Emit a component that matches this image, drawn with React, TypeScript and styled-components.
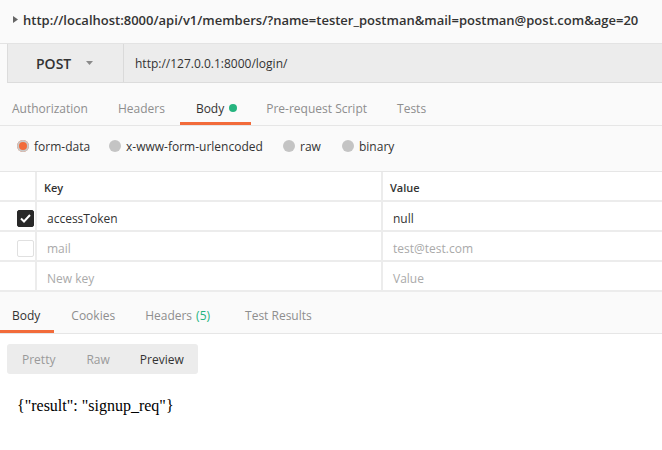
import React from "react";
import styled, { createGlobalStyle } from "styled-components";

const GlobalStyle = createGlobalStyle`
  html, body { margin: 0; padding: 0; background: #ffffff; }
  body { font-family: "Open Sans", "Liberation Sans", sans-serif; color: #333; }
  * { box-sizing: border-box; }
`;

const Page = styled.div`
  width: 662px;
  height: 450px;
  overflow: hidden;
  background: #ffffff;
  display: flex;
  flex-direction: column;
`;

const TopBar = styled.div`
  height: 44px;
  background: #fafafa;
  border-bottom: 1px solid #e3e3e3;
  display: flex;
  align-items: center;
  padding: 0 0 4px 13px;
  gap: 5px;
`;

const TopTitle = styled.span`
  font-size: 13px;
  font-weight: 600;
  color: #333;
  white-space: nowrap;
`;

const RequestArea = styled.div`
  background: #fafafa;
  padding-left: 7px;
`;

const RequestBar = styled.div`
  height: 39px;
  display: flex;
  background: #ececec;
  border: 1px solid #dcdcdc;
  border-right: none;
  border-top: none;
`;

const MethodSelect = styled.div`
  width: 116px;
  border-right: 1px solid #dadada;
  display: flex;
  align-items: center;
  padding-left: 28px;
  gap: 15px;
  font-size: 14px;
  font-weight: 600;
  color: #333;
`;

const UrlInput = styled.div`
  display: flex;
  align-items: center;
  padding-left: 11px;
  font-size: 12px;
  color: #333;
`;

const TabRow = styled.div<{ $height: number }>`
  height: ${(p) => p.$height}px;
  background: #fafafa;
  border-bottom: 1px solid #e6e6e6;
  display: flex;
  align-items: stretch;
`;

const Tab = styled.div<{ $active?: boolean; $pl: number; $pr: number; $pt: number }>`
  display: flex;
  align-items: center;
  gap: 5px;
  padding: ${(p) => p.$pt}px ${(p) => p.$pr}px 0 ${(p) => p.$pl}px;
  font-size: 12px;
  color: ${(p) => (p.$active ? "#333" : "#8e8e8e")};
  border-bottom: 3px solid ${(p) => (p.$active ? "#f26b3a" : "transparent")};
  white-space: nowrap;
`;

const Dot = styled.span`
  width: 8px;
  height: 8px;
  border-radius: 50%;
  background: #26b47f;
`;

const Count = styled.span`
  color: #26b47f;
  margin-left: 4px;
`;

const OptionsRow = styled.div`
  height: 45px;
  background: #fafafa;
  display: flex;
  align-items: center;
  padding: 0 0 5px 17px;
`;

const RadioOption = styled.label<{ $w: number }>`
  width: ${(p) => p.$w}px;
  display: flex;
  align-items: center;
  gap: 5px;
  font-size: 12px;
  color: #333;
`;

const Radio = styled.span<{ $on?: boolean }>`
  width: 12px;
  height: 12px;
  border-radius: 50%;
  background: ${(p) => (p.$on ? "#f26b3a" : "#c4c4c4")};
  box-shadow: ${(p) => (p.$on ? "inset 0 0 0 2px #c9c9c9" : "none")};
`;

const Table = styled.div`
  display: grid;
  grid-template-columns: 37px 346px 1fr;
  border-top: 1px solid #e6e6e6;
  background: #ffffff;
`;

const Cell = styled.div<{ $head?: boolean; $muted?: boolean; $last?: boolean }>`
  height: 30px;
  display: flex;
  align-items: center;
  padding-top: ${(p) => (p.$head ? 2 : 4)}px;
  padding-left: ${(p) => (p.$head ? 7 : 10)}px;
  border-bottom: 2px solid #ececec;
  border-right: ${(p) => (p.$last ? "none" : "2px solid #ececec")};
  font-size: ${(p) => (p.$head ? 11 : 12)}px;
  font-weight: ${(p) => (p.$head ? 600 : 400)};
  color: ${(p) => (p.$muted ? "#aaa" : "#333")};
`;

const CheckCell = styled.div`
  height: 30px;
  display: flex;
  align-items: center;
  padding-top: 4px;
  padding-left: 17px;
  border-bottom: 2px solid #ececec;
  border-right: 2px solid #ececec;
`;

const Checkbox = styled.span<{ $checked?: boolean }>`
  width: 17px;
  height: 17px;
  border-radius: 2px;
  background: ${(p) => (p.$checked ? "#282828" : "#fff")};
  border: 1px solid ${(p) => (p.$checked ? "#282828" : "#e0e0e0")};
  display: flex;
  align-items: center;
  justify-content: center;
`;

const Spacer = styled.div`
  height: 2px;
  background: #fafafa;
`;

const ResponseBody = styled.div`
  flex: 1;
  background: #ffffff;
  padding: 10px 7px;
`;

const Segmented = styled.div`
  width: 191px;
  height: 30px;
  background: #ececec;
  border-radius: 3px;
  display: flex;
  align-items: center;
`;

const Segment = styled.span<{ $active?: boolean; $pl: number }>`
  padding-left: ${(p) => p.$pl}px;
  font-size: 12px;
  color: ${(p) => (p.$active ? "#333" : "#9a9a9a")};
`;

const Output = styled.div`
  margin-top: 23px;
  padding-left: 10px;
  font-family: "Liberation Serif", "Times New Roman", serif;
  font-size: 16px;
  color: #000;
`;

const Caret = () => (
  <svg width="7" height="4" viewBox="0 0 7 4">
    <path d="M0 0 L7 0 L3.5 4 Z" fill="#8a8a8a" />
  </svg>
);

const Expand = () => (
  <svg width="5" height="7" viewBox="0 0 5 7">
    <path d="M0 0 L5 3.5 L0 7 Z" fill="#666" />
  </svg>
);

const Tick = () => (
  <svg width="11" height="9" viewBox="0 0 11 9">
    <path d="M1 4.5 L4 7.5 L10 1" stroke="#fff" strokeWidth="2" fill="none" />
  </svg>
);

export default function App() {
  return (
    <Page>
      <GlobalStyle />
      <TopBar>
        <Expand />
        <TopTitle>
          http://localhost:8000/api/v1/members/?name=tester_postman&amp;mail=postman@post.com&amp;age=20
        </TopTitle>
      </TopBar>
      <RequestArea>
        <RequestBar>
          <MethodSelect>
            POST <Caret />
          </MethodSelect>
          <UrlInput>http://127.0.0.1:8000/login/</UrlInput>
        </RequestBar>
      </RequestArea>
      <TabRow $height={43}>
        <Tab $pt={11} $pl={12} $pr={15}>Authorization</Tab>
        <Tab $pt={11} $pl={15} $pr={15}>Headers</Tab>
        <Tab $pt={11} $active $pl={16} $pr={14}>
          Body <Dot />
        </Tab>
        <Tab $pt={11} $pl={15} $pr={15}>Pre-request Script</Tab>
        <Tab $pt={11} $pl={15} $pr={15}>Tests</Tab>
      </TabRow>
      <OptionsRow>
        <RadioOption $w={92}>
          <Radio $on /> form-data
        </RadioOption>
        <RadioOption $w={174}>
          <Radio /> x-www-form-urlencoded
        </RadioOption>
        <RadioOption $w={59}>
          <Radio /> raw
        </RadioOption>
        <RadioOption $w={80}>
          <Radio /> binary
        </RadioOption>
      </OptionsRow>
      <Table>
        <CheckCell />
        <Cell $head>Key</Cell>
        <Cell $head $last>Value</Cell>

        <CheckCell>
          <Checkbox $checked>
            <Tick />
          </Checkbox>
        </CheckCell>
        <Cell>accessToken</Cell>
        <Cell $last>null</Cell>

        <CheckCell>
          <Checkbox />
        </CheckCell>
        <Cell $muted>mail</Cell>
        <Cell $muted $last>test@test.com</Cell>

        <CheckCell />
        <Cell $muted>New key</Cell>
        <Cell $muted $last>Value</Cell>
      </Table>
      <Spacer />
      <TabRow $height={40}>
        <Tab $pt={6} $active $pl={12} $pr={14}>Body</Tab>
        <Tab $pt={6} $pl={17} $pr={15}>Cookies</Tab>
        <Tab $pt={6} $pl={15} $pr={15}>
          <span>
            Headers<Count>(5)</Count>
          </span>
        </Tab>
        <Tab $pt={6} $pl={20} $pr={15}>Test Results</Tab>
      </TabRow>
      <ResponseBody>
        <Segmented>
          <Segment $pl={15}>Pretty</Segment>
          <Segment $pl={31}>Raw</Segment>
          <Segment $pl={30} $active>
            Preview
          </Segment>
        </Segmented>
        <Output>{'{"result": "signup_req"}'}</Output>
      </ResponseBody>
    </Page>
  );
}
